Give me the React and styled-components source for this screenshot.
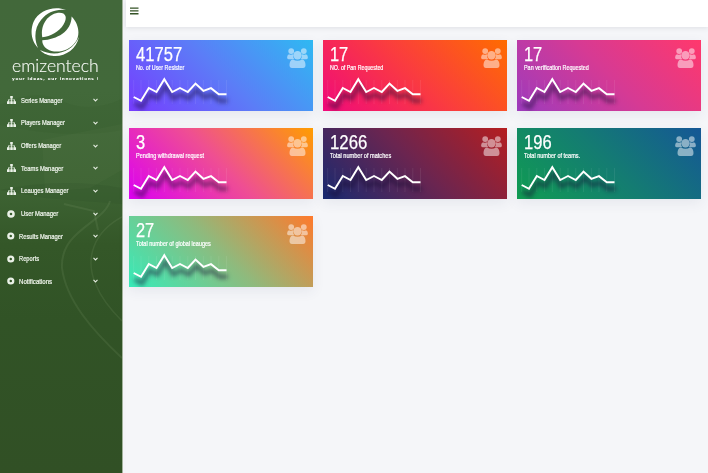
import React, { useLayoutEffect, useRef } from 'react';
import styled, { createGlobalStyle } from 'styled-components';

const GlobalStyle = createGlobalStyle`
  * { box-sizing: border-box; }
  html, body { margin: 0; padding: 0; overflow: hidden; }
  body { font-family: "Liberation Sans Narrow", "Liberation Sans", Arial, sans-serif; }
`;

const Page = styled.div`
  display: flex;
  width: 708px;
  height: 473px;
  background: #f5f6f9;
`;

const Sidebar = styled.aside`
  position: relative;
  flex: 0 0 123px;
  height: 100%;
  border-right: 1px solid #a3b39c;
  background: linear-gradient(180deg, #42683a 0, #42693a 90px, #3d6333 190px, #345728 245px, #315326 320px, #315025 473px);
`;

const Scenery = styled.svg`
  position: absolute;
  inset: 0;
  width: 122px;
  height: 473px;
`;

const SidebarBody = styled.div`
  position: relative;
  display: flex;
  flex-direction: column;
`;

const Brand = styled.div`
  height: 89px;
  padding: 7px 0 0 12px;
`;

const Emblem = styled.svg`
  display: block;
  width: 50px;
  height: 50px;
  margin-left: 18px;
`;

const FitBox = styled.span`
  display: block;
  width: ${(p) => p.$w}px;
  height: ${(p) => p.$lh}px;
  line-height: ${(p) => p.$lh}px;
  font-size: ${(p) => p.$size}px;
  white-space: nowrap;
`;

const FitInner = styled.span`
  display: inline-block;
  vertical-align: top;
  transform-origin: 0 50%;
`;

function Fit({ w, size, lh, children, className }) {
  const ref = useRef(null);
  useLayoutEffect(() => {
    const el = ref.current;
    el.style.transform = `scaleX(${w / el.offsetWidth})`;
  }, [w, children]);
  return (
    <FitBox className={className} $w={w} $size={size} $lh={lh}>
      <FitInner ref={ref}>{children}</FitInner>
    </FitBox>
  );
}

const Wordmark = styled(Fit)`
  font-family: Lato, "Open Sans", sans-serif;
  font-weight: 300;
  color: #f4f8f2;
  -webkit-text-stroke: 0.15px #f4f8f2;
`;

const Tagline = styled(Fit)`
  margin-top: 2.5px;
  font-family: "DejaVu Sans", sans-serif;
  font-weight: 700;
  letter-spacing: 0.6px;
  color: #fff;
`;

const Menu = styled.nav`
  display: flex;
  flex-direction: column;
`;

const MenuItem = styled.div`
  display: flex;
  align-items: center;
  height: 22.65px;
  padding: 0 24px 0 7px;
`;

const MenuIcon = styled.svg`
  width: ${(p) => (p.$gap === 5 ? 9 : 8.5)}px;
  height: 8px;
  margin-right: ${(p) => p.$gap}px;
  fill: #eaf1e7;
`;

const MenuLabel = styled(Fit)`
  color: #f0f5ed;
  -webkit-text-stroke: 0.22px #f0f5ed;
`;

const Chevron = styled.svg`
  width: 5px;
  height: 4px;
  margin-left: auto;
  fill: none;
  stroke: #e3ebdf;
  stroke-width: 1.1;
`;

const Main = styled.main`
  flex: 1;
  min-width: 0;
  border-left: 3px solid #f4f4f8;
`;

const Topbar = styled.header`
  height: 27px;
  padding: 7px 0 0 3.5px;
  background: #fff;
  box-shadow: 0 1px 5px rgba(60, 65, 80, 0.12);
`;

const Burger = styled.svg`
  display: block;
  width: 9px;
  height: 8px;
  fill: #345326;
`;

const CardGrid = styled.section`
  display: grid;
  grid-template-columns: repeat(3, 184.5px);
  grid-auto-rows: 71px;
  gap: 17px 9.6px;
  padding: 13.4px 0 0 2.8px;
`;

const Card = styled.article`
  position: relative;
  padding: 3.5px 0 0 7px;
  background: linear-gradient(45deg, ${(p) => p.$colors});
  box-shadow: 0 4px 12px rgba(50, 60, 100, 0.08);
  color: #fff;
`;

const Count = styled(Fit)`
  -webkit-text-stroke: 0.25px #fff;
`;

const Caption = styled(Fit)`
  -webkit-text-stroke: 0.2px #fff;
`;

const PeopleIcon = styled.svg`
  position: absolute;
  top: 8px;
  right: 5px;
  width: 21px;
  height: 20px;
  fill: #fff;
  opacity: 0.5;
`;

const Chart = styled.svg`
  position: absolute;
  left: 0;
  top: 32px;
  width: 110px;
  height: 39px;
`;

const TrendShadow = styled.polyline`
  fill: none;
  stroke: rgba(20, 10, 50, 0.5);
  stroke-width: 4;
  filter: blur(2px);
`;

const TrendLine = styled.polyline`
  fill: none;
  stroke: #fff;
  stroke-width: 1.95;
  stroke-linejoin: miter;
`;

const points = [
  [4.7, 25], [12, 28.8], [19.8, 16], [27.5, 20], [35.3, 7.2], [43.2, 20], [51, 16],
  [58.8, 20], [66.5, 11.6], [74.4, 18.8], [82, 16.2], [89.8, 22.2], [97.5, 22.2],
];
const line = points.map((p) => p.join(',')).join(' ');

function TrendChart() {
  return (
    <Chart viewBox="0 0 110 39">
      {points.map(([x]) => (
        <path key={x} d={`M${x} 8V32`} stroke="#fff" strokeOpacity=".11" strokeWidth=".7" />
      ))}
      <TrendShadow points={line} transform="translate(1 6.5)" />
      <TrendLine points={line} />
    </Chart>
  );
}

function People() {
  return (
    <PeopleIcon viewBox="0 0 21 20">
      <circle cx="4.2" cy="3.1" r="2.9" />
      <circle cx="16.8" cy="3.1" r="2.9" />
      <path d="M2 6.200Q4 7.300 6 6.300Q5.700 9.200 7.200 11.300H1.600Q0 11.300 .1 9.300Q.3 6.900 2 6.200Z" />
      <path d="M19 6.200Q17 7.300 15 6.300Q15.300 9.200 13.800 11.300H19.400Q21 11.300 20.900 9.300Q20.700 6.900 19 6.200Z" />
      <circle cx="10.5" cy="7.3" r="4.200" />
      <path d="M5.900 11.400Q10.500 14 15.100 11.400Q18.500 12.100 18.500 17Q18.500 20 16 20H5Q2.500 20 2.500 17Q2.500 12.100 5.900 11.400Z" />
    </PeopleIcon>
  );
}

function Logo() {
  return (
    <Emblem viewBox="0 0 50 50" fill="#fff">
      <path d="M36 3C24-1.500 9 3 3.500 15C-.5 25 2 35 8 41C3.500 31 5 20 11 13C17 5 27 1.500 36 3Z" />
      <path d="M12.300 30.300C10 19 17 7.500 28 5.800C35.500 5 38 10 33.500 17.500C29 25 20.500 29.200 12.300 30.300Z" />
      <path d="M41.600 9.500C49 17 50.500 28 45.500 35C40 43 30 46 21.500 44C15.500 42.500 12 38 12.300 33.300C27 32.500 41.500 24.500 41.600 9.500Z" />
      <path d="M49 30C46 43 34 50.500 22 48.800C16 48 12.500 45.800 10 43C25 50.500 42 45.500 49 30Z" />
    </Emblem>
  );
}

const menu = [
  ['Series Manager', 41, 'tree'],
  ['Players Manager', 44, 'tree'],
  ['Offers Manager', 40.5, 'tree'],
  ['Teams Manager', 42, 'tree'],
  ['Leauges Manager', 47, 'tree'],
  ['User Manager', 37, 'disc', 5],
  ['Results Manager', 44, 'disc', 3.5],
  ['Reports', 20.5, 'disc', 3.5],
  ['Notifications', 33, 'disc', 3.5],
];

const cards = [
  ['41757', 46, 'No. of User Resister', 48, '#763cff, #5c7cf7 50%, #2fb9f2'],
  ['17', 18.5, 'NO. of Pan Requested', 53, '#f00a7b, #fa3b40 50%, #ff6c00'],
  ['17', 18.5, 'Pan verification Requested', 65, '#9d3bbd, #d63a94 50%, #ff386c'],
  ['3', 9.3, 'Pending withdrawal request', 68, '#dc00f2, #ef4f92 50%, #ff9d00'],
  ['1266', 37, 'Total number of matches', 61, '#182a70, #6b2550 50%, #b51e20'],
  ['196', 28, 'Total number of teams.', 56, '#109c52, #147c72 50%, #155796'],
  ['27', 18.5, 'Total number of global leauges', 75, '#36ebb9, #8fba7d 50%, #ff7a2c'],
];

export default function App() {
  return (
    <>
      <GlobalStyle />
      <Page>
        <Sidebar>
          <Scenery viewBox="0 0 122 473" fill="none">
            <path d="M0 105Q35 88 62 101T122 99V130Q70 140 0 125Z" fill="#254d1f" opacity=".1" />
            <path d="M42 140L122 124V170L90 188L45 192Z" fill="#67895b" opacity=".1" />
            <path d="M0 190Q60 177 122 188V204L45 198Z" fill="#213f1a" opacity=".1" />
            <g stroke="#8ba77c" strokeOpacity=".15">
              <path d="M110 201C104 223 60 230 62 268C66 300 92 330 122 358" strokeWidth="2" />
              <path d="M122 217C94 232 84 258 96 285C102 300 113 312 122 321" strokeWidth="1.500" />
              <path d="M64 204L94 211L98 230" strokeWidth="2" />
            </g>
          </Scenery>
          <SidebarBody>
            <Brand>
              <Logo />
              <Wordmark w={87} size={18} lh={17}>emizentech</Wordmark>
              <Tagline w={87} size={3.8} lh={4}>your ideas, our innovations !</Tagline>
            </Brand>
            <Menu>
              {menu.map(([label, w, icon, gap]) => (
                <MenuItem key={label}>
                  {icon === 'tree' ? (
                    <MenuIcon viewBox="0 0 9 8" $gap={5}>
                      <path d="M3.200 0H5.800V2.600H4.900V3.500H8V5.200H9V8H6.300V5.200H7.200V4.300H4.900V5.200H5.800V8H3.200V5.200H4.100V4.300H1.800V5.200H2.700V8H0V5.200H1V3.500H4.100V2.600H3.200Z" />
                    </MenuIcon>
                  ) : (
                    <MenuIcon viewBox="0 0 9 8" $gap={gap}>
                      <path fillRule="evenodd" d="M4 .2A3.800 3.800 0 1 0 4 7.800A3.800 3.800 0 1 0 4 .2ZM4 2.700A1.300 1.300 0 1 1 4 5.300A1.300 1.300 0 1 1 4 2.700Z" />
                    </MenuIcon>
                  )}
                  <MenuLabel w={w} size={7} lh={9}>{label}</MenuLabel>
                  <Chevron viewBox="0 0 5 4"><path d="M.5 .8L2.500 2.900L4.500 .8" /></Chevron>
                </MenuItem>
              ))}
            </Menu>
          </SidebarBody>
        </Sidebar>
        <Main>
          <Topbar>
            <Burger viewBox="0 0 9 8"><path d="M0 .5H8.500V1.800H0ZM0 3.300H8.500V4.600H0ZM0 6.100H8.500V7.400H0Z" /></Burger>
          </Topbar>
          <CardGrid>
            {cards.map(([count, cw, caption, w, colors]) => (
              <Card key={caption} $colors={colors}>
                <Count w={cw} size={19.5} lh={20}>{count}</Count>
                <Caption w={w} size={6.6} lh={8}>{caption}</Caption>
                <People />
                <TrendChart />
              </Card>
            ))}
          </CardGrid>
        </Main>
      </Page>
    </>
  );
}
